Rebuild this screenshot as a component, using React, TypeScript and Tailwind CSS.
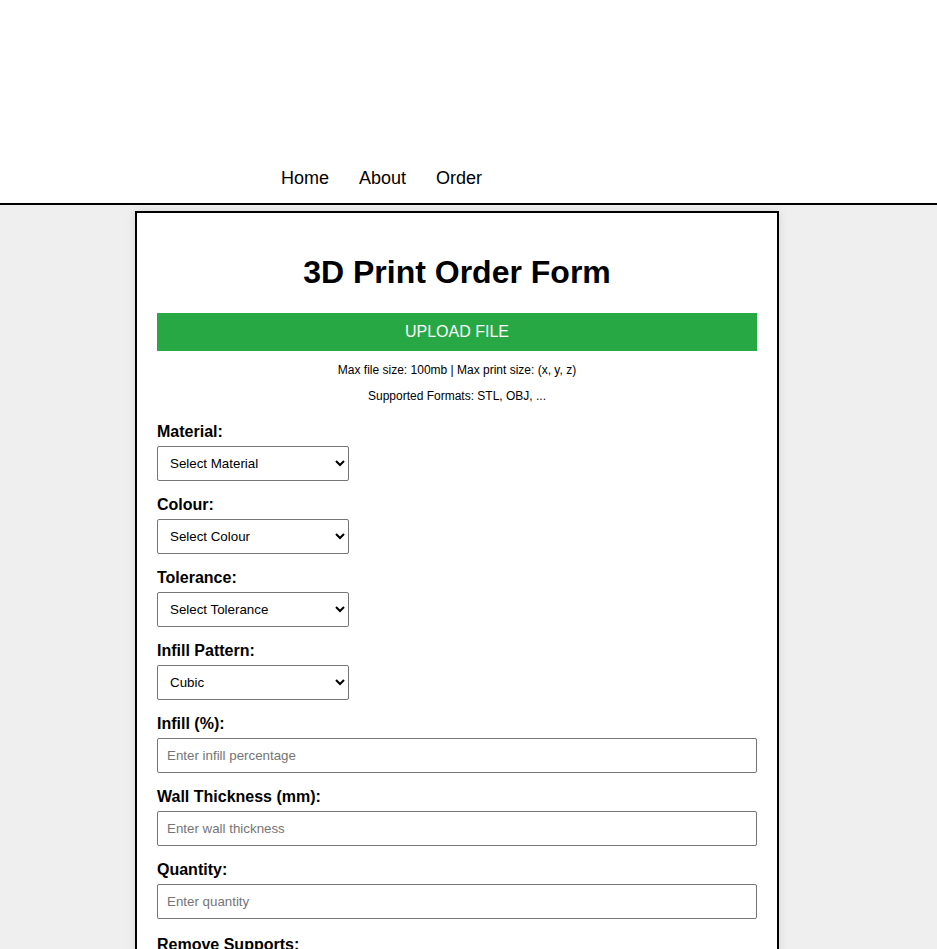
import React from 'react';

const selectFields = [
  { label: 'Material:', options: ['Select Material', 'PLA', 'PETG', 'ABS', 'TPU'] },
  { label: 'Colour:', options: ['Select Colour', 'Black', 'White', 'Red', 'Blue'] },
  { label: 'Tolerance:', options: ['Select Tolerance', '±0.1 mm', '±0.2 mm', '±0.5 mm'] },
  { label: 'Infill Pattern:', options: ['Cubic', 'Grid', 'Gyroid', 'Honeycomb'] },
];

const inputFields = [
  { label: 'Infill (%):', placeholder: 'Enter infill percentage' },
  { label: 'Wall Thickness (mm):', placeholder: 'Enter wall thickness' },
  { label: 'Quantity:', placeholder: 'Enter quantity' },
];

const labelCls = 'mt-[15px] block text-[16px] leading-[18px] font-bold text-black';
const selectCls =
  'mt-[5px] h-[35px] w-[192px] border border-[#767676] bg-white px-[8px] text-[13.33px] text-black rounded-[2px]';
const inputCls =
  'mt-[5px] h-[35px] w-full border border-[#767676] bg-white px-[9px] text-[13.33px] text-black rounded-[2px] placeholder:text-[#757575]';

export default function App() {
  return (
    <div className="min-h-screen bg-[#efefef] font-['Liberation_Sans',Arial,sans-serif] text-black">
      <header className="flex h-[205px] items-end border-b-2 border-black bg-white pb-[14px] pl-[281px]">
        <nav className="flex gap-[30px] text-[18px] leading-[21px]">
          <a href="#">Home</a>
          <a href="#">About</a>
          <a href="#">Order</a>
        </nav>
      </header>

      <main className="pb-10 pl-[135px] pt-[6px]">
        <div className="flex w-[644px] flex-col border-2 border-black bg-white px-[20px] pb-[30px] pt-[20px] shadow-[0_0_10px_rgba(0,0,0,0.1)]">
          <h1 className="mb-[22px] mt-[21px] text-center text-[32px] leading-[37px] font-bold">
            3D Print Order Form
          </h1>

          <button className="h-[38px] w-full bg-[#28a745] text-[16px] text-white uppercase">
            Upload File
          </button>
          <p className="mt-[12px] text-center text-[12px] leading-[14px]">
            Max file size: 100mb | Max print size: (x, y, z)
          </p>
          <p className="mt-[12px] text-center text-[12px] leading-[14px]">
            Supported Formats: STL, OBJ, ...
          </p>

          <div className="mt-[5px] flex flex-col">
            {selectFields.map((f) => (
              <React.Fragment key={f.label}>
                <label className={labelCls}>{f.label}</label>
                <select className={selectCls} defaultValue={f.options[0]}>
                  {f.options.map((o) => (
                    <option key={o}>{o}</option>
                  ))}
                </select>
              </React.Fragment>
            ))}

            {inputFields.map((f) => (
              <React.Fragment key={f.label}>
                <label className={labelCls}>{f.label}</label>
                <input type="text" className={inputCls} placeholder={f.placeholder} />
              </React.Fragment>
            ))}

            <label className="mt-[17px] block text-[16px] leading-[18px] font-bold text-black">
              Remove Supports:
            </label>
            <select className={selectCls} defaultValue="Yes">
              <option>Yes</option>
              <option>No</option>
            </select>

            <label className={labelCls}>Additional Notes:</label>
            <textarea
              className="mt-[5px] h-[80px] w-full border border-[#767676] bg-white px-[9px] py-[6px] text-[13.33px] rounded-[2px] placeholder:text-[#757575]"
              placeholder="Enter any additional notes"
            />

            <button className="mt-[20px] h-[38px] w-full bg-[#28a745] text-[16px] text-white">
              Submit Order
            </button>
          </div>
        </div>
      </main>
    </div>
  );
}
